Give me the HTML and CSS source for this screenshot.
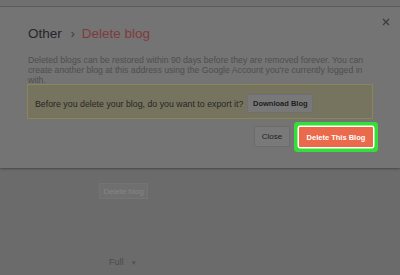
FILE: index.html
```html
<!DOCTYPE html>
<html>
<head>
<meta charset="utf-8">
<link rel="stylesheet" href="styles.css">
</head>
<body>
<div class="topstrip"></div>
<div class="dialog">
  <button class="x" aria-label="Close">
    <svg width="8" height="8" viewBox="0 0 8 8"><path d="M1 1L7 7M7 1L1 7" stroke="#3c3c3c" stroke-width="1.3" fill="none"/></svg>
  </button>
  <h1 class="title"><span class="crumb">Other</span><span class="sep">›</span><span class="cur">Delete blog</span></h1>
  <p class="desc">Deleted blogs can be restored within 90 days before they are removed forever. You can<br>create another blog at this address using the Google Account you're currently logged in<br>with.</p>
  <div class="notice">
    <span class="ntext">Before you delete your blog, do you want to export it?</span>
    <button class="btn dl">Download Blog</button>
  </div>
  <div class="actions">
    <button class="btn close">Close</button>
    <button class="btn del">Delete This Blog</button>
  </div>
</div>
<div class="below">
  <div class="ghost">Delete blog</div>
  <div class="full">Full <span class="arr">▾</span></div>
</div>
</body>
</html>
```
FILE: styles.css
```css
html, body {
  margin: 0;
  padding: 0;
}
body {
  width: 400px;
  height: 275px;
  overflow: hidden;
  background: #6b6b6b;
  font-family: "Liberation Sans", Arial, sans-serif;
}
.topstrip {
  height: 6px;
  background: #6f6f6f;
  border-bottom: 1px solid #5f5f5f;
}
.dialog {
  position: relative;
  background: #747474;
  padding: 19px 27px 21px 27px;
  box-shadow: 0 1px 2px rgba(0,0,0,0.35);
}
.x {
  position: absolute;
  top: 10px;
  right: 9px;
  width: 10px;
  height: 10px;
  padding: 0;
  border: 0;
  background: none;
  display: flex;
  align-items: center;
  justify-content: center;
}
.title {
  margin: 0 0 0 1px;
  font-size: 13.5px;
  line-height: 16px;
  font-weight: normal;
  display: flex;
  align-items: baseline;
}
.crumb { color: #262626; }
.sep { color: #3a3a3a; margin: 0 7px 0 9px; font-size: 12px; }
.cur { color: #803a3d; }
.desc {
  margin: 13px 0 0 1px;
  font-size: 8.7px;
  line-height: 10px;
  color: #4e4e4e;
  white-space: nowrap;
}
.notice {
  margin-top: -1px;
  border: 1px solid #8a8754;
  background: #76745f;
  padding: 9px 8px 5px 7px;
  display: flex;
  align-items: center;
  gap: 4px;
}
.ntext {
  font-size: 8.8px;
  color: #262626;
  white-space: nowrap;
}
.btn {
  font-family: "Liberation Sans", Arial, sans-serif;
  font-size: 7.5px;
  font-weight: bold;
  border-radius: 1px;
  padding: 0;
  display: flex;
  align-items: center;
  justify-content: center;
  white-space: nowrap;
}
.dl {
  width: 66px;
  height: 19px;
  background: #787878;
  border: 1px solid #6f6f6f;
  color: #1e1e1e;
}
.actions {
  margin-top: 8px;
  display: flex;
  justify-content: flex-end;
  align-items: flex-start;
  gap: 9px;
}
.close {
  width: 36px;
  height: 21px;
  margin-top: -1px;
  background: #797979;
  border: 1px solid #6c6c6c;
  color: #222;
  font-weight: normal;
  font-size: 8px;
}
.del {
  width: 74px;
  height: 20px;
  background: #ec6a4c;
  border: 0;
  color: #fff;
  box-shadow: 0 0 0 1.5px #ffffff, 0 0 0 5px #37dc36;
}
.below {
  padding: 15px 0 0 99px;
}
.ghost {
  width: 49px;
  height: 16px;
  box-sizing: border-box;
  border: 1px solid #747474;
  background: #6f6f6f;
  color: #868686;
  font-size: 8px;
  display: flex;
  align-items: center;
  justify-content: center;
}
.full {
  margin: 58px 0 0 10px;
  font-size: 9px;
  color: #4a4a4a;
}
.arr {
  font-size: 7px;
  margin-left: 6px;
  color: #505050;
}
```
